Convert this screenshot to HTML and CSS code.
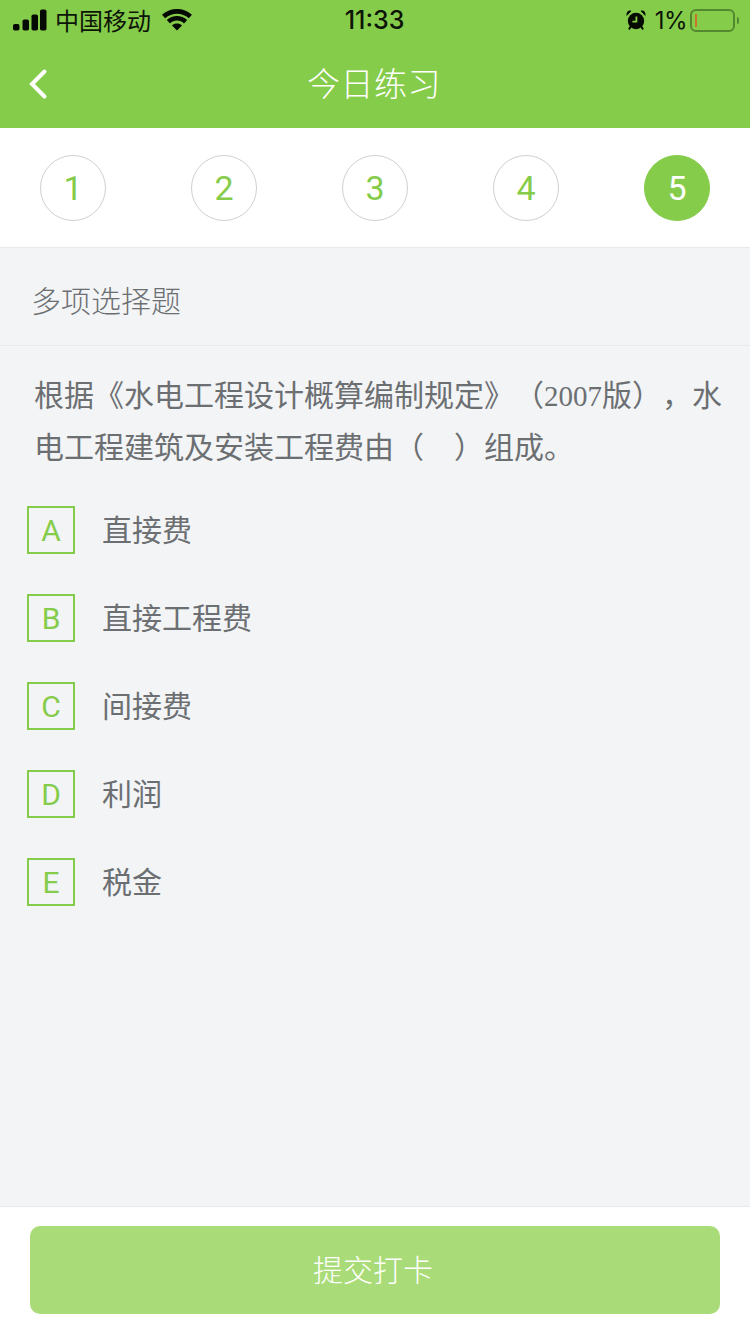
FILE: index.html
```html
<!DOCTYPE html>
<html lang="zh-CN">
<head>
  <meta charset="UTF-8" />
  <meta name="viewport" content="width=device-width, initial-scale=1.0" />
  <title>今日练习</title>
  <link rel="stylesheet" href="styles.css">
</head>
<body>
  <div class="page">
    <header class="top">
      <div class="status">
        <div class="status-left">
          <svg class="signal" width="34" height="22" viewBox="0 0 34 22">
            <rect x="0" y="15" width="6.5" height="6.5" rx="1.8" />
            <rect x="9.5" y="10.5" width="6.5" height="11" rx="1.8" />
            <rect x="18.5" y="5.5" width="6.5" height="16" rx="1.8" />
            <rect x="27" y="0.5" width="6.5" height="21" rx="1.8" />
          </svg>
          <span class="carrier">中国移动</span>
          <svg class="wifi" width="30" height="22" viewBox="0 0 30 22">
            <path d="M15 21.5 L10 16.4 C12.8 13.8 17.2 13.8 20 16.4 Z" />
            <path d="M8 14.4 L4.8 11 C10.4 5.6 19.6 5.6 25.2 11 L22 14.4 C18 10.6 12 10.6 8 14.4 Z" />
            <path d="M3.2 9.2 L0 5.8 C8.4 -2 21.6 -2 30 5.8 L26.8 9.2 C20.2 3.2 9.8 3.2 3.2 9.2 Z" />
          </svg>
        </div>
        <span class="clock">11:33</span>
        <div class="status-right">
          <svg class="alarm" width="20" height="20" viewBox="0 0 20 20">
            <circle cx="10" cy="11" r="8.2" />
            <path d="M0.6 6 L5.4 1 C3 -0.4 -0.2 1.8 0.6 6 Z M19.4 6 L14.6 1 C17 -0.4 20.2 1.8 19.4 6 Z" />
            <path d="M4.6 16.6 L3 19.4 M15.4 16.6 L17 19.4" class="alarm-feet" />
            <path d="M10.4 6.4 V11.6 H6.4" class="alarm-hands" />
          </svg>
          <span class="percent">1%</span>
          <div class="battery"><span class="battery-level"></span></div>
          <span class="battery-tip"></span>
        </div>
      </div>
      <div class="navbar">
        <svg class="back" width="20" height="32" viewBox="0 0 20 32">
          <path d="M16.5 3.5 L4 16 L16.5 28.5" />
        </svg>
        <h1>今日练习</h1>
      </div>
    </header>

    <nav class="steps">
      <span class="step">1</span>
      <span class="step">2</span>
      <span class="step">3</span>
      <span class="step">4</span>
      <span class="step current">5</span>
    </nav>

    <main class="content">
      <div class="kind">多项选择题</div>
      <p class="question">根据《水电工程设计概算编制规定》（<span class="year">2007</span>版），水电工程建筑及安装工程费由（<span class="blank"></span>）组成。</p>
      <ul class="options">
        <li><span class="letter">A</span><span class="label">直接费</span></li>
        <li><span class="letter">B</span><span class="label">直接工程费</span></li>
        <li><span class="letter">C</span><span class="label">间接费</span></li>
        <li><span class="letter">D</span><span class="label">利润</span></li>
        <li><span class="letter">E</span><span class="label">税金</span></li>
      </ul>
    </main>

    <footer class="bottom">
      <button>提交打卡</button>
    </footer>
  </div>
</body>
</html>
```

FILE: styles.css
```css
:root {
  --green: #86cc4b;
  --bg: #f3f4f6;
  --text: #6c6f72;
  --line: #e8e9ea;
}

* {
  box-sizing: border-box;
}

body {
  margin: 0;
  font-family: "Noto Sans CJK SC", sans-serif;
  background: var(--bg);
  color: var(--text);
}

.page {
  height: 1334px;
  display: flex;
  flex-direction: column;
  overflow: hidden;
}

.top {
  height: 128px;
  background: var(--green);
}

.status {
  height: 40px;
  padding: 0 11px 0 13px;
  display: grid;
  grid-template-columns: 1fr auto 1fr;
  align-items: center;
  color: #0c1407;
}

.status-left,
.status-right {
  display: flex;
  align-items: center;
}

.status-right {
  justify-content: flex-end;
}

.signal {
  fill: #050a02;
}

.carrier {
  margin-left: 8px;
  font-size: 24px;
  line-height: 40px;
}

.wifi {
  fill: #050a02;
  margin-left: 11px;
}

.clock {
  margin-right: 3px;
  font-family: Inter, sans-serif;
  font-size: 25px;
  font-weight: 500;
}

.alarm {
  margin-right: 9px;
  fill: #050a02;
  stroke: none;
}

.alarm-feet {
  fill: none;
  stroke: #050a02;
  stroke-width: 2;
}

.alarm-hands {
  fill: none;
  stroke: var(--green);
  stroke-width: 1.8;
}

.percent {
  font-family: Inter, sans-serif;
  font-size: 24px;
  letter-spacing: -0.5px;
}

.battery {
  width: 45px;
  height: 23px;
  margin-left: 3px;
  padding: 3px;
  border: 2px solid #54882f;
  border-radius: 6px;
}

.battery-level {
  display: block;
  width: 2px;
  height: 100%;
  background: #c9732c;
}

.battery-tip {
  width: 2px;
  height: 7px;
  margin-left: 2px;
  background: #54882f;
  border-radius: 0 2px 2px 0;
}

.navbar {
  position: relative;
  height: 88px;
  display: flex;
  align-items: center;
  justify-content: center;
}

.navbar h1 {
  margin: 0 2px 5px 0;
  font-size: 33px;
  font-weight: 300;
  letter-spacing: 0.5px;
  color: #fff;
}

.back {
  position: absolute;
  left: 28px;
  top: 28px;
  fill: none;
  stroke: #fff;
  stroke-width: 4;
  stroke-linecap: round;
}

.steps {
  height: 120px;
  padding: 0 40px;
  display: flex;
  align-items: center;
  justify-content: space-between;
  background: #fff;
  border-bottom: 1px solid var(--line);
}

.step {
  width: 66px;
  height: 66px;
  display: flex;
  align-items: center;
  justify-content: center;
  border: 1px solid #d0d0d0;
  border-radius: 50%;
  font-family: Roboto, sans-serif;
  font-size: 34px;
  color: var(--green);
}

.step.current {
  border-color: var(--green);
  background: var(--green);
  color: #fff;
}

.content {
  flex: 1;
}

.kind {
  height: 98px;
  padding: 5px 31px 0;
  display: flex;
  align-items: center;
  border-bottom: 1px solid var(--line);
  font-size: 30px;
  font-weight: 300;
}

.question {
  margin: 21px 0 0;
  padding: 0 24px 0 34px;
  font-size: 30px;
  line-height: 52px;
  text-spacing-trim: space-all;
}

.year {
  font-family: "Liberation Serif", serif;
  font-size: 29px;
  line-height: 0;
}

.blank {
  display: inline-block;
  width: 30px;
}

.options {
  margin: 15px 0 0;
  padding: 0;
  list-style: none;
}

.options li {
  height: 88px;
  padding-left: 27px;
  display: flex;
  align-items: center;
  font-size: 30px;
}

.label {
  margin-bottom: 4px;
}

.letter {
  width: 48px;
  height: 48px;
  margin-right: 27px;
  display: flex;
  align-items: center;
  justify-content: center;
  border: 2px solid var(--green);
  font-family: Roboto, sans-serif;
  font-size: 30px;
  color: var(--green);
}

.bottom {
  height: 128px;
  padding: 19px 30px 0;
  background: #fff;
  border-top: 1px solid var(--line);
}

.bottom button {
  width: 100%;
  height: 88px;
  padding: 0 4px 4px 0;
  border: none;
  border-radius: 10px;
  background: #a9dc78;
  color: #fff;
  font-family: inherit;
  font-size: 30px;
  font-weight: 300;
}
```
